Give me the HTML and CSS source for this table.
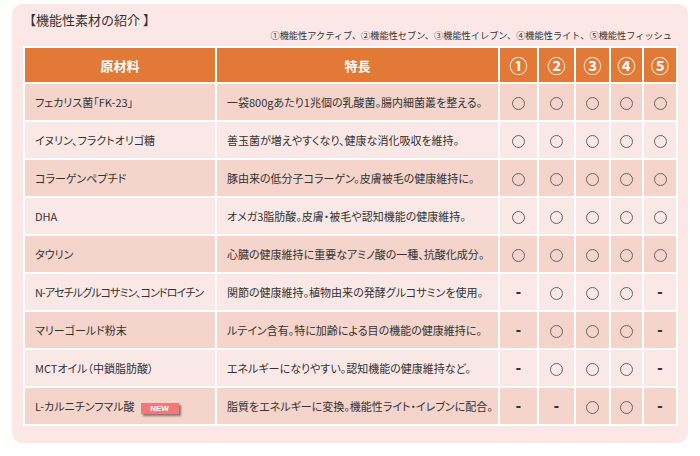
FILE: index.html
```html
<!DOCTYPE html>
<html lang="ja">
<head>
<meta charset="utf-8">
<title>機能性素材の紹介</title>
<link rel="stylesheet" href="styles.css">
</head>
<body>
<div class="panel">
  <h2 class="title">【機能性素材の紹介 】</h2>
  <p class="legend">①機能性アクティブ、②機能性セブン、③機能性イレブン、④機能性ライト、⑤機能性フィッシュ</p>
  <table class="spec">
    <colgroup>
      <col class="c-name"><col class="c-feat"><col class="c1"><col class="c2"><col class="c3"><col class="c4"><col class="c5">
    </colgroup>
    <thead>
      <tr><th>原材料</th><th>特長</th><th class="num">①</th><th class="num">②</th><th class="num">③</th><th class="num">④</th><th class="num">⑤</th></tr>
    </thead>
    <tbody>
      <tr><td>フェカリス菌「FK-23」</td><td>一袋800gあたり1兆個の乳酸菌。腸内細菌叢を整える。</td><td class="m"><span class="ok"></span></td><td class="m"><span class="ok"></span></td><td class="m"><span class="ok"></span></td><td class="m"><span class="ok"></span></td><td class="m"><span class="ok"></span></td></tr>
      <tr><td>イヌリン、フラクトオリゴ糖</td><td>善玉菌が増えやすくなり、健康な消化吸収を維持。</td><td class="m"><span class="ok"></span></td><td class="m"><span class="ok"></span></td><td class="m"><span class="ok"></span></td><td class="m"><span class="ok"></span></td><td class="m"><span class="ok"></span></td></tr>
      <tr><td>コラーゲンペプチド</td><td>豚由来の低分子コラーゲン。皮膚被毛の健康維持に。</td><td class="m"><span class="ok"></span></td><td class="m"><span class="ok"></span></td><td class="m"><span class="ok"></span></td><td class="m"><span class="ok"></span></td><td class="m"><span class="ok"></span></td></tr>
      <tr><td>DHA</td><td>オメガ3脂肪酸。皮膚・被毛や認知機能の健康維持。</td><td class="m"><span class="ok"></span></td><td class="m"><span class="ok"></span></td><td class="m"><span class="ok"></span></td><td class="m"><span class="ok"></span></td><td class="m"><span class="ok"></span></td></tr>
      <tr><td>タウリン</td><td>心臓の健康維持に重要なアミノ酸の一種、抗酸化成分。</td><td class="m"><span class="ok"></span></td><td class="m"><span class="ok"></span></td><td class="m"><span class="ok"></span></td><td class="m"><span class="ok"></span></td><td class="m"><span class="ok"></span></td></tr>
      <tr><td class="tight">N-アセチルグルコサミン、コンドロイチン</td><td>関節の健康維持。植物由来の発酵グルコサミンを使用。</td><td class="m dash">-</td><td class="m"><span class="ok"></span></td><td class="m"><span class="ok"></span></td><td class="m"><span class="ok"></span></td><td class="m dash">-</td></tr>
      <tr><td>マリーゴールド粉末</td><td>ルテイン含有。特に加齢による目の機能の健康維持に。</td><td class="m dash">-</td><td class="m"><span class="ok"></span></td><td class="m"><span class="ok"></span></td><td class="m"><span class="ok"></span></td><td class="m dash">-</td></tr>
      <tr><td>MCTオイル（中鎖脂肪酸）</td><td>エネルギーになりやすい。認知機能の健康維持など。</td><td class="m dash">-</td><td class="m"><span class="ok"></span></td><td class="m"><span class="ok"></span></td><td class="m"><span class="ok"></span></td><td class="m dash">-</td></tr>
      <tr><td>L-カルニチンフマル酸<span class="new">NEW</span></td><td>脂質をエネルギーに変換。機能性ライト・イレブンに配合。</td><td class="m dash">-</td><td class="m dash">-</td><td class="m"><span class="ok"></span></td><td class="m"><span class="ok"></span></td><td class="m dash">-</td></tr>
    </tbody>
  </table>
</div>
</body>
</html>
```

FILE: styles.css
```css
html, body {
  margin: 0;
  padding: 0;
  background: #ffffff;
}
body {
  font-family: "Noto Sans CJK JP", "Noto Sans", sans-serif;
  font-feature-settings: "palt";
  color: #333333;
}
.panel {
  box-sizing: border-box;
  width: 676px;
  height: 439px;
  margin: 4px 0 0 12px;
  padding: 8px 11px 0 11px;
  background: #fce7e7;
  border-radius: 10px;
}
.title {
  margin: 0;
  font-size: 13px;
  line-height: 16px;
  font-weight: normal;
  font-feature-settings: normal;
  color: #333333;
}
.legend {
  margin: 1px 5px 0 0;
  font-size: 9.2px;
  line-height: 12px;
  text-align: right;
  color: #333333;
  font-feature-settings: normal;
}
.spec {
  margin-top: 5px;
  width: 653px;
  table-layout: fixed;
  border-collapse: collapse;
}
.c-name { width: 192px; }
.c-feat { width: 283px; }
.c1 { width: 39px; }
.c2 { width: 37px; }
.c3 { width: 35px; }
.c4 { width: 33px; }
.c5 { width: 34px; }
.spec th,
.spec td {
  border: 2px solid #ffffff;
  padding: 0;
}
.spec thead tr {
  height: 36px;
}
.spec th {
  background: #e27936;
  color: #ffffff;
  font-size: 13px;
  font-weight: bold;
  text-align: center;
}
.spec th.num {
  font-size: 18px;
}
.spec tbody tr {
  height: 38px;
}
.spec tbody tr:nth-child(odd) td {
  background: #f4d4cb;
}
.spec tbody tr:nth-child(even) td {
  background: #fae8e6;
}
.spec td {
  font-size: 11px;
  padding-left: 10px;
  white-space: nowrap;
  overflow: hidden;
  color: #333333;
}
.spec td.tight {
  letter-spacing: -0.9px;
}
.spec td.m {
  padding: 0;
  text-align: center;
}
.ok {
  display: inline-block;
  box-sizing: border-box;
  width: 13px;
  height: 13px;
  border: 1px solid #666666;
  border-radius: 50%;
  vertical-align: middle;
}
.spec td.dash {
  font-family: "Liberation Sans", sans-serif;
  font-weight: bold;
  font-size: 16px;
  color: #333333;
}
.new {
  display: inline-block;
  box-sizing: border-box;
  width: 38px;
  height: 11px;
  margin-left: 6px;
  background: #ee7a7a;
  color: #ffffff;
  font-family: "Liberation Sans", sans-serif;
  font-size: 8px;
  font-weight: bold;
  line-height: 11px;
  text-align: center;
  vertical-align: middle;
  letter-spacing: 0;
  box-shadow: 2px 2px 2px rgba(0, 0, 0, 0.45);
}
```
